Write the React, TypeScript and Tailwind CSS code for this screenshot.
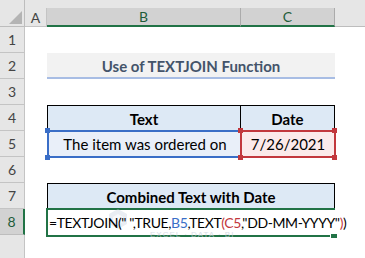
import React from "react";

const hdr = "bg-[#e6e6e6] text-[#444] flex items-center justify-center text-[14px]";

export default function App() {
  const rows = [1, 2, 3, 4, 5, 6, 7, 8];
  return (
    <div className="relative w-[365px] h-[258px] overflow-hidden bg-white grid grid-cols-[25px_22px_194px_94px_30px] grid-rows-[8px_19px_repeat(8,26px)_23px] font-['Lato',sans-serif] text-black">
      {/* corner */}
      <div className="col-start-1 row-start-1 row-span-2 bg-[#e6e6e6] border-r border-b border-[#bdbdbd] relative">
        <svg className="absolute right-[2px] bottom-[2px]" width="13" height="13" viewBox="0 0 13 13">
          <polygon points="0,13 13,13 13,0" fill="#b4b4b4" />
        </svg>
      </div>
      {/* top band */}
      <div className="col-start-2 col-span-4 row-start-1 bg-[#e6e6e6]" />
      {/* column headers */}
      <div className={`col-start-2 row-start-2 ${hdr} border-r border-b border-[#c4c4c4]`}>A</div>
      <div className="col-start-3 row-start-2 bg-[#d2d2d2] border-r border-[#ababab] border-b-2 border-b-[#217346] text-[#1e5c3a] flex items-center justify-center text-[14px]">B</div>
      <div className="col-start-4 row-start-2 bg-[#d2d2d2] border-r border-[#ababab] border-b-2 border-b-[#217346] text-[#1e5c3a] flex items-center justify-center text-[14px]">C</div>
      <div className="col-start-5 row-start-2 bg-[#e6e6e6] border-b border-[#bdbdbd]" />

      {/* row headers */}
      {rows.map((r) =>
        r === 8 ? (
          <div key={r} className="col-start-1 row-start-10 bg-[#d2d2d2] border-r-2 border-r-[#217346] border-b border-b-[#bdbdbd] text-[#1e5c3a] flex items-center justify-center text-[14px]">8</div>
        ) : (
          <div key={r} className={`col-start-1 ${hdr} border-r border-b border-[#c4c4c4]`} style={{ gridRowStart: r + 2 }}>{r}</div>
        )
      )}
      <div className="col-start-1 row-start-11 bg-[#e6e6e6] border-r border-[#c4c4c4]" />

      {/* title row 2 */}
      <div className="col-start-3 col-span-2 row-start-4 bg-[#f2f2f2] border-b-2 border-[#a8bde4] flex items-center justify-center text-[15px] font-bold text-[#44546a] pt-[2px]">
        Use of TEXTJOIN Function
      </div>

      {/* row 4 table header */}
      <div className="col-start-3 row-start-6 bg-[#dde9f5] border-l border-t border-r border-black flex items-center justify-center text-[15px] font-bold pt-[2px]">Text</div>
      <div className="col-start-4 row-start-6 bg-[#dde9f5] border-t border-r border-black flex items-center justify-center text-[15px] font-bold pt-[2px]">Date</div>

      {/* row 5 */}
      <div className="col-start-3 row-start-7 relative">
        <div className="absolute left-0 right-[-2px] top-[-1px] bottom-[-1px] bg-[#e9eff9] border-2 border-[#3a6ec7] flex items-center justify-center text-[15px]">
          The item was ordered on
        </div>
        <div className="absolute left-[-2px] top-[-3px] w-[5px] h-[5px] bg-[#3a6ec7]" />
        <div className="absolute left-[-2px] bottom-[-3px] w-[5px] h-[5px] bg-[#3a6ec7]" />
      </div>
      <div className="col-start-4 row-start-7 relative">
        <div className="absolute left-[-1px] right-[-1px] top-[-1px] bottom-[-1px] bg-[#fbeaea] border-2 border-[#c2383d] flex items-center justify-center text-[15px]">
          7/26/2021
        </div>
        <div className="absolute left-[-3px] top-[-3px] w-[5px] h-[5px] bg-[#c2383d]" />
        <div className="absolute right-[-2px] top-[-3px] w-[5px] h-[5px] bg-[#c2383d]" />
        <div className="absolute left-[-3px] bottom-[-3px] w-[5px] h-[5px] bg-[#c2383d]" />
        <div className="absolute right-[-2px] bottom-[-3px] w-[5px] h-[5px] bg-[#c2383d]" />
      </div>

      {/* row 7 */}
      <div className="col-start-3 col-span-2 row-start-9 bg-[#dde9f5] border-l border-t border-r border-black flex items-center justify-center text-[15px] font-bold pt-[1px]">
        Combined Text with Date
      </div>

      {/* row 8 */}
      <div className="col-start-3 col-span-2 row-start-10 relative">
        <div className="absolute left-[-1px] right-0 top-[-1px] bottom-[-2px] border-l-2 border-t-2 border-b-2 border-[#217346]" />
        <div className="absolute left-[2px] top-0 bottom-0 flex items-center whitespace-nowrap text-[14px] tracking-[-0.4px] pt-[1px] z-10">
          <span>=TEXTJOIN(" ",TRUE,</span>
          <span className="text-[#3a6ec7]">B5</span>
          <span>,TEXT</span>
          <span className="text-[#c2383d]">(C5</span>
          <span>,"DD-MM-YYYY"</span>
          <span className="text-[#c2383d]">)</span>
          <span>)</span>
        </div>
        <div className="absolute right-[-2px] bottom-[-3px] w-[7px] h-[4px] bg-[#217346] border-l border-white" />
      </div>

      {/* watermark */}
      <div className="absolute left-[108px] top-[208px] flex items-end gap-[2px] opacity-40 pointer-events-none">
        <svg width="20" height="22" viewBox="0 0 20 22">
          <polygon points="10,1 19,6 19,16 10,21 1,16 1,6" fill="#c9d3e3" />
          <polygon points="10,6 15,9 15,14 10,17 5,14 5,9" fill="#eef2f8" />
        </svg>
      </div>
      <div className="absolute left-[150px] top-[229px] text-[8px] tracking-[1px] text-[#c9d1dc] opacity-70 font-['Liberation_Sans',sans-serif] pointer-events-none">
        EXCEL · DATA · BI
      </div>
    </div>
  );
}
